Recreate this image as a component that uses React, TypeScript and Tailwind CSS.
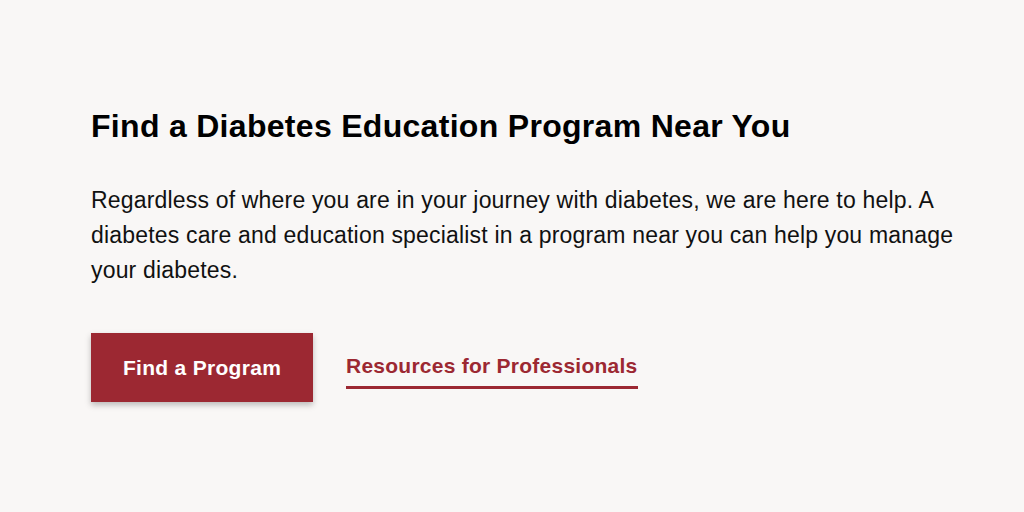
export default function App() {
  return (
    <div
      className="w-[1024px] h-[512px] bg-[#f9f7f6] text-black overflow-hidden"
      style={{ fontFamily: '"Liberation Sans", Arial, sans-serif' }}
    >
      <div className="pl-[91px] pr-[50px] pt-[107px]">
        <h1 className="text-[32px] font-bold leading-[38px] tracking-[0.3px]">
          Find a Diabetes Education Program Near You
        </h1>
        <p className="mt-[38px] text-[23px] leading-[35px] tracking-[0.18px] text-[#111] max-w-[880px]">
          Regardless of where you are in your journey with diabetes, we are here to help. A diabetes care and
          education specialist in a program near you can help you manage your diabetes.
        </p>
        <div className="mt-[45px] flex items-center gap-[33px]">
          <a
            href="#"
            className="flex items-center justify-center w-[222px] h-[69px] bg-[#9c2832] text-white text-[21px] font-bold tracking-[0.3px] shadow-[0_3px_6px_rgba(0,0,0,0.25)]"
          >
            Find a Program
          </a>
          <a
            href="#"
            className="text-[#9c2832] text-[21px] font-bold tracking-[0.25px] pb-[5px] border-b-[3px] border-[#9c2832] mt-[4px]"
          >
            Resources for Professionals
          </a>
        </div>
      </div>
    </div>
  );
}
